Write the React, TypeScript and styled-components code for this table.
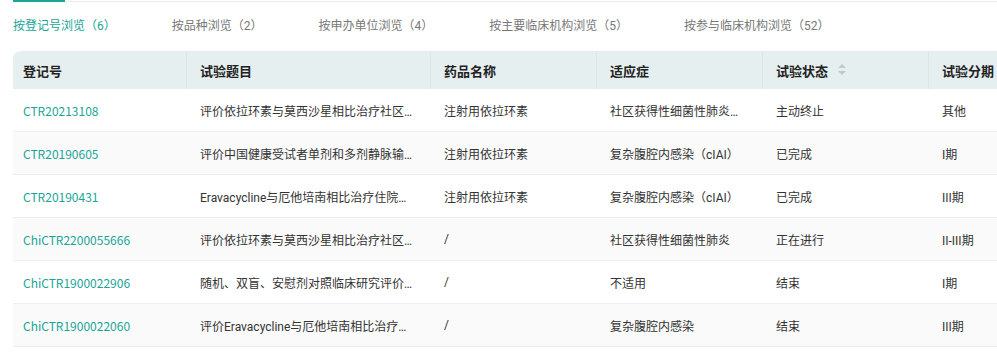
import React from 'react';
import styled, { createGlobalStyle } from 'styled-components';

const GlobalStyle = createGlobalStyle`
  html, body {
    margin: 0;
    padding: 0;
    background: #fff;
    overflow: hidden;
  }
  body {
    font-family: Roboto, "Noto Sans CJK SC", sans-serif;
    color: #333;
  }
`;

const TEAL = '#19a597';

const Page = styled.div`
  width: 997px;
  height: 352px;
  overflow: hidden;
  padding-left: 13px;
  box-sizing: border-box;
`;

const InkRail = styled.div`
  height: 2px;
  display: flex;
  align-items: flex-end;
  background: linear-gradient(to bottom, transparent 1px, #ececec 1px);
`;

const InkBar = styled.div`
  width: 52px;
  height: 2px;
  background: ${TEAL};
`;

const TabBar = styled.div`
  height: 44px;
  display: flex;
  align-items: center;
  gap: 56px;
`;

const Tab = styled.span<{ $active?: boolean }>`
  font-size: 12px;
  white-space: nowrap;
  color: ${(p) => (p.$active ? TEAL : '#777')};
  cursor: pointer;
`;

const Table = styled.div`
  margin-top: 5px;
  width: 1082px;
  border-radius: 8px 8px 0 0;
  overflow: hidden;
`;

const COLS = '174px 244px 166px 166px 166px 166px';

const HeadRow = styled.div`
  display: grid;
  grid-template-columns: ${COLS};
  height: 38px;
  background: #e6eff0;
`;

const HeadCell = styled.div<{ $first?: boolean }>`
  display: flex;
  align-items: center;
  padding-left: ${(p) => (p.$first ? '10px' : '13px')};
  font-size: 13px;
  font-weight: 700;
  color: #222;
  border-left: ${(p) => (p.$first ? 'none' : '1px solid #dbe6e7')};
  margin-left: ${(p) => (p.$first ? '0' : '-1px')};
`;

const SortIcon = styled.svg`
  margin-left: 10px;
  flex: none;
`;

const Row = styled.div<{ $striped?: boolean }>`
  display: grid;
  grid-template-columns: ${COLS};
  height: 42px;
  border-bottom: 1px solid #ebeef5;
  background: ${(p) => (p.$striped ? '#fafafa' : '#fff')};
`;

const Cell = styled.div<{ $first?: boolean }>`
  display: flex;
  align-items: center;
  min-width: 0;
  padding: 0 13px 0 ${(p) => (p.$first ? '10px' : '13px')};
  font-size: 12px;
  color: #333;
`;

const Ellipsis = styled.span`
  overflow: hidden;
  white-space: nowrap;
  text-overflow: ellipsis;
`;

const RegLink = styled.a`
  color: ${TEAL};
  text-decoration: none;
  font-family: "Noto Sans CJK SC", Roboto, sans-serif;
  font-size: 12px;
  white-space: nowrap;
`;

const tabs = [
  '按登记号浏览（6）',
  '按品种浏览（2）',
  '按申办单位浏览（4）',
  '按主要临床机构浏览（5）',
  '按参与临床机构浏览（52）',
];

const heads = ['登记号', '试验题目', '药品名称', '适应症', '试验状态', '试验分期'];

const rows = [
  ['CTR20213108', '评价依拉环素与莫西沙星相比治疗社区获得性细菌性肺炎的有效性和安全性', '注射用依拉环素', '社区获得性细菌性肺炎（CABP）', '主动终止', '其他'],
  ['CTR20190605', '评价中国健康受试者单剂和多剂静脉输注依拉环素的药代动力学', '注射用依拉环素', '复杂腹腔内感染（cIAI）', '已完成', 'I期'],
  ['CTR20190431', 'Eravacycline与厄他培南相比治疗住院成人复杂腹腔内感染', '注射用依拉环素', '复杂腹腔内感染（cIAI）', '已完成', 'III期'],
  ['ChiCTR2200055666', '评价依拉环素与莫西沙星相比治疗社区获得性细菌性肺炎', '/', '社区获得性细菌性肺炎', '正在进行', 'II-III期'],
  ['ChiCTR1900022906', '随机、双盲、安慰剂对照临床研究评价依拉环素', '/', '不适用', '结束', 'I期'],
  ['ChiCTR1900022060', '评价Eravacycline与厄他培南相比治疗复杂腹腔内感染', '/', '复杂腹腔内感染', '结束', 'III期'],
];

export default function App() {
  return (
    <Page>
      <GlobalStyle />
      <InkRail>
        <InkBar />
      </InkRail>
      <TabBar>
        {tabs.map((t, i) => (
          <Tab key={t} $active={i === 0}>
            {t}
          </Tab>
        ))}
      </TabBar>
      <Table>
        <HeadRow>
          {heads.map((h, i) => (
            <HeadCell key={h} $first={i === 0}>
              {h}
              {h === '试验状态' && (
                <SortIcon width="8" height="12" viewBox="0 0 8 12">
                  <path d="M4 0 L8 4 L0 4 Z" fill="#c3c8cc" />
                  <path d="M0 7 L8 7 L4 11 Z" fill="#c3c8cc" />
                </SortIcon>
              )}
            </HeadCell>
          ))}
        </HeadRow>
        {rows.map((r, ri) => (
          <Row key={r[0]} $striped={ri % 2 === 1}>
            {r.map((c, ci) => (
              <Cell key={ci} $first={ci === 0}>
                {ci === 0 ? <RegLink href="#">{c}</RegLink> : <Ellipsis>{c}</Ellipsis>}
              </Cell>
            ))}
          </Row>
        ))}
      </Table>
    </Page>
  );
}
